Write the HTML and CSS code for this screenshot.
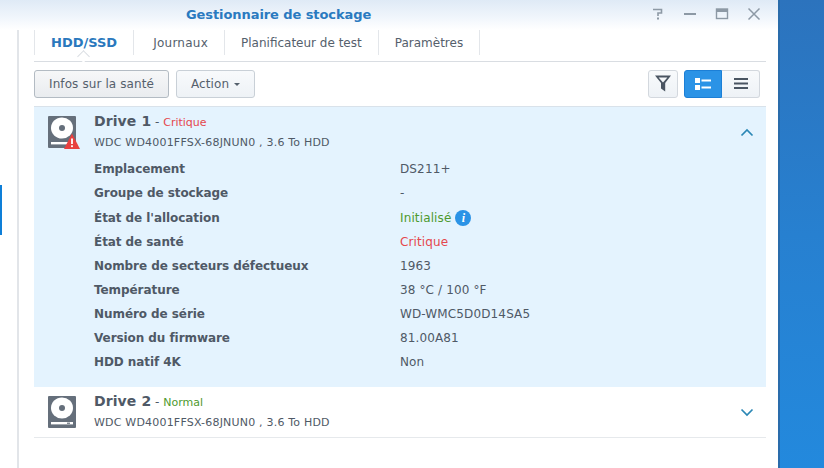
FILE: index.html
```html
<!DOCTYPE html>
<html lang="fr">
<head>
<meta charset="utf-8">
<title>Gestionnaire de stockage</title>
<link rel="stylesheet" href="styles.css">
</head>
<body>
<div class="window">
  <header class="titlebar">
    <div class="title">Gestionnaire de stockage</div>
    <div class="winctl">
      <svg width="14" height="14" viewBox="0 0 14 14"><path d="M2 2.5 H10.5 V6 H7 V9" fill="none" stroke="#8d99a5" stroke-width="1.6"/><rect x="6" y="10.5" width="2" height="2" fill="#8d99a5"/></svg>
      <svg width="14" height="14" viewBox="0 0 14 14"><rect x="1" y="6" width="12" height="2" fill="#8d99a5"/></svg>
      <svg width="14" height="14" viewBox="0 0 14 14"><rect x="1.5" y="2" width="11" height="9.5" fill="none" stroke="#8d99a5" stroke-width="1.4"/><rect x="1" y="2" width="12" height="3" fill="#8d99a5"/></svg>
      <svg width="14" height="14" viewBox="0 0 14 14"><path d="M1.5 1.5 L12.5 12.5 M12.5 1.5 L1.5 12.5" stroke="#8d99a5" stroke-width="1.5"/></svg>
    </div>
  </header>
  <div class="winbody">
    <aside class="sidebar"><div class="selected"></div></aside>
    <main class="content">
      <nav class="tabs">
        <a class="tab active">HDD/SSD</a>
        <a class="tab wide">Journaux</a>
        <a class="tab">Planificateur de test</a>
        <a class="tab">Paramètres</a>
      </nav>
      <div class="toolbar">
        <button class="btn primary">Infos sur la santé</button>
        <button class="btn">Action <span class="caret"></span></button>
        <div class="spacer"></div>
        <button class="iconbtn">
          <svg width="16" height="17" viewBox="0 0 16 17"><path d="M0 0.5 H16 L10.2 8 V16.5 L6 13.5 V8 Z M3.6 2.4 L8 7.6 L12.4 2.4 Z" fill="#4a5562" fill-rule="evenodd"/></svg>
        </button>
        <div class="segment">
          <button class="seg on">
            <svg width="16" height="12" viewBox="0 0 16 12"><rect x="0" y="0" width="5" height="5" fill="#fff"/><rect x="0" y="7" width="5" height="5" fill="#fff"/><rect x="6.5" y="1.5" width="9.5" height="2" fill="#fff"/><rect x="6.5" y="8.5" width="9.5" height="2" fill="#fff"/></svg>
          </button>
          <button class="seg">
            <svg width="14" height="11" viewBox="0 0 14 11"><rect width="14" height="2" fill="#4a5562"/><rect y="4.5" width="14" height="2" fill="#4a5562"/><rect y="9" width="14" height="2" fill="#4a5562"/></svg>
          </button>
        </div>
      </div>
      <section class="drive open">
        <div class="drivehead">
          <div class="hdd">
            <svg width="33" height="34" viewBox="0 0 33 34"><rect x="0" y="0" width="28" height="32" rx="1" fill="#656f7b"/><ellipse cx="14" cy="12" rx="11" ry="10.5" fill="#fff"/><circle cx="14" cy="12" r="3" fill="#656f7b"/><rect x="3" y="26" width="22" height="2.4" fill="#fff"/><path d="M16 33 L24 17.5 L32 33 Z" fill="#e8403f"/><rect x="23.1" y="22.5" width="1.8" height="5.5" fill="#fff"/><rect x="23.1" y="29.3" width="1.8" height="1.8" fill="#fff"/></svg>
          </div>
          <div class="driveinfo">
            <div class="drivename"><b>Drive 1</b> - <span class="red small">Critique</span></div>
            <div class="drivemodel">WDC WD4001FFSX-68JNUN0 , 3.6 To HDD</div>
          </div>
          <svg class="chev" width="14" height="9" viewBox="0 0 14 9"><path d="M1.5 7.5 L7 2 L12.5 7.5" fill="none" stroke="#2b87b5" stroke-width="1.7"/></svg>
        </div>
        <dl class="props">
          <dt>Emplacement</dt><dd>DS211+</dd>
          <dt>Groupe de stockage</dt><dd>-</dd>
          <dt>État de l'allocation</dt><dd class="green">Initialisé <span class="info">i</span></dd>
          <dt>État de santé</dt><dd class="red">Critique</dd>
          <dt>Nombre de secteurs défectueux</dt><dd>1963</dd>
          <dt>Température</dt><dd>38 °C / 100 °F</dd>
          <dt>Numéro de série</dt><dd>WD-WMC5D0D14SA5</dd>
          <dt>Version du firmware</dt><dd>81.00A81</dd>
          <dt>HDD natif 4K</dt><dd>Non</dd>
        </dl>
      </section>
      <section class="drive">
        <div class="drivehead">
          <div class="hdd">
            <svg width="33" height="34" viewBox="0 0 33 34"><rect x="0" y="0" width="28" height="32" rx="1" fill="#656f7b"/><ellipse cx="14" cy="12" rx="11" ry="10.5" fill="#fff"/><circle cx="14" cy="12" r="3" fill="#656f7b"/><rect x="3" y="26" width="22" height="2.4" fill="#fff"/><rect x="19" y="26.6" width="3" height="1.2" fill="#656f7b"/></svg>
          </div>
          <div class="driveinfo">
            <div class="drivename"><b>Drive 2</b> - <span class="green small">Normal</span></div>
            <div class="drivemodel">WDC WD4001FFSX-68JNUN0 , 3.6 To HDD</div>
          </div>
          <svg class="chev" width="14" height="9" viewBox="0 0 14 9"><path d="M1.5 1.5 L7 7 L12.5 1.5" fill="none" stroke="#2b87b5" stroke-width="1.7"/></svg>
        </div>
      </section>
    </main>
  </div>
</div>
<div class="desktop"></div>
</body>
</html>
```
FILE: styles.css
```css
* { box-sizing: border-box; }
html, body { margin: 0; height: 100%; }
body {
  display: flex;
  width: 824px;
  height: 468px;
  overflow: hidden;
  background: #fff;
  font-family: "DejaVu Sans", Verdana, sans-serif;
  font-size: 12px;
  color: #4f5966;
}
.window { width: 778px; display: flex; flex-direction: column; background: #fff; }
.desktop {
  width: 46px;
  background: linear-gradient(180deg, #2c73bd 0%, #2780d0 50%, #2389dd 100%);
  border-left: 2px solid #2a6cab;
}
.titlebar {
  height: 30px;
  flex: none;
  display: flex;
  align-items: center;
  background: linear-gradient(180deg, #dfeaf6 0%, #f1f6fc 60%, #fff 100%);
  padding: 0 17px 2px 186px;
}
.title { font-size: 13px; font-weight: 700; color: #2a7ac0; flex: 1; letter-spacing: -0.08px; }
.winctl { display: flex; gap: 18px; }
.winbody { flex: 1; display: flex; min-height: 0; }
.sidebar { width: 19px; flex: none; border-right: 2px solid #e2e5e9; position: relative; }
.selected { position: absolute; left: 0; top: 155px; width: 2px; height: 50px; background: #0e7fd8; }
.content { flex: 1; padding: 0 12px 0 15px; min-width: 0; }
.tabs {
  height: 32px;
  display: flex;
  align-items: flex-start;
  border-bottom: 1px solid #d9dde2;
}
.tab {
  height: 25px;
  display: flex;
  align-items: center;
  padding: 0 16px;
  border-right: 1px solid #e3e6ea;
  color: #55606c;
  font-size: 12px;
}
.tab.wide { padding-left: 19px; letter-spacing: 0.25px; }
.tab:first-child { border-left: 1px solid #e3e6ea; }
.tab.active { color: #2a78bd; font-size: 13px; font-weight: 700; position: relative; }
.tab.active::after {
  content: "";
  position: absolute;
  left: 44px;
  bottom: -6px;
  width: 8px;
  height: 8px;
  background: #fff;
  border-left: 1px solid #d9dde2;
  border-top: 1px solid #d9dde2;
  transform: rotate(45deg);
}
.toolbar { height: 45px; display: flex; align-items: center; gap: 7px; border-bottom: 1px solid #d9e2ea; padding: 0 6px 1px 0; }
.spacer { flex: 1; }
.btn {
  height: 28px;
  font: 12px "DejaVu Sans", Verdana, sans-serif;
  letter-spacing: 0.1px;
  color: #55606c;
  border: 1px solid #c9d0d7;
  border-radius: 3px;
  background: linear-gradient(180deg, #f8fafc, #eef2f6);
  padding: 1px 14px 0;
}
.btn.primary { border-color: #b3bbc3; background: linear-gradient(180deg, #f6f7f8, #e9ecef); }
.caret {
  display: inline-block;
  width: 0; height: 0;
  margin-left: 1px;
  vertical-align: 2px;
  border-left: 3px solid transparent;
  border-right: 3px solid transparent;
  border-top: 3px solid #55606c;
}
.iconbtn {
  width: 30px; height: 28px;
  padding: 0;
  display: flex; align-items: center; justify-content: center;
  border: 1px solid #d3d8de;
  border-radius: 3px;
  background: linear-gradient(180deg, #f8fafc, #eef2f6);
}
.segment { display: flex; margin-left: -1px; }
.seg {
  width: 38px; height: 28px;
  padding: 0;
  display: flex; align-items: center; justify-content: center;
  border: 1px solid #d3d8de;
  border-left: 0;
  border-radius: 0 3px 3px 0;
  background: linear-gradient(180deg, #f8fafc, #eef2f6);
}
.seg.on { border: 1px solid #1c7fd6; border-radius: 3px 0 0 3px; background: #2b93e6; }
.drive { border-bottom: 1px solid #e6e9ec; }
.drive.open { background: #e4f3fe; border-bottom: 0; height: 280px; }
.drivehead { height: 50px; display: flex; align-items: center; padding: 0 12px 0 14px; }
.hdd { width: 46px; flex: none; display: flex; padding-top: 2px; }
.driveinfo { flex: 1; }
.drivename { font-size: 12px; height: 19px; line-height: 19px; }
.drivename b { font-size: 14px; letter-spacing: 0.1px; }
.small { font-size: 11px; }
.drivemodel { font-size: 11px; height: 21px; line-height: 24px; letter-spacing: 0.2px; }
.chev { flex: none; }
.red { color: #e5474d; }
.green { color: #4e9a2f; }
.props {
  margin: 0;
  padding: 0.3px 0 0 60px;
  display: grid;
  grid-template-columns: 306px 1fr;
  grid-auto-rows: 24.12px;
  align-items: center;
}
.props dt { font-weight: 700; font-size: 12px; letter-spacing: -0.07px; }
.props dd { margin: 0; font-size: 12px; letter-spacing: 0.13px; display: flex; align-items: center; gap: 4px; }
.info {
  width: 16px; height: 16px;
  border-radius: 50%;
  background: #2b93e6;
  color: #fff;
  font: italic 700 12px/16px "Liberation Serif", serif;
  text-align: center;
  display: inline-block;
}
```
